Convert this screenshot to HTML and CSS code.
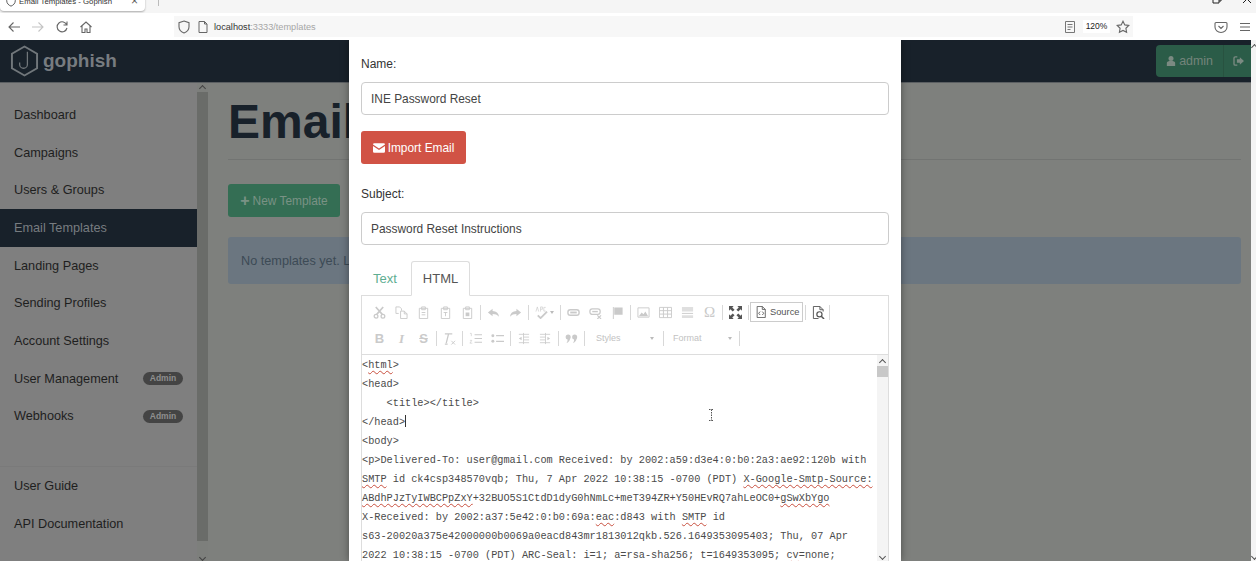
FILE: index.html
```html
<!DOCTYPE html>
<html lang="en">
<head>
<meta charset="utf-8">
<title>Email Templates - Gophish</title>
<link rel="stylesheet" href="styles.css">
</head>
<body>
<svg class="defs" width="0" height="0" aria-hidden="true">
  <defs>
    <symbol id="i-cut" viewBox="0 0 14 14"><path d="M3 1l7 8M11 1L4 9" fill="none" stroke="currentColor" stroke-width="1.8"/><circle cx="3.300" cy="11" r="2" fill="none" stroke="currentColor" stroke-width="1.400"/><circle cx="10.700" cy="11" r="2" fill="none" stroke="currentColor" stroke-width="1.400"/></symbol>
    <symbol id="i-copy" viewBox="0 0 14 14"><path d="M1 1h4l2 2v2M1 1v7h3M6 5.500h4l3 3v5H6zM10 5.500v3h3" fill="none" stroke="currentColor"/></symbol>
    <symbol id="i-paste" viewBox="0 0 14 14"><path d="M2.500 2.500h9v11h-9z" fill="none" stroke="currentColor"/><path d="M5 1h4v3H5zM5 7h4M5 9.500h4" fill="none" stroke="currentColor"/></symbol>
    <symbol id="i-pastet" viewBox="0 0 14 14"><path d="M2.500 2.500h9v11h-9z" fill="none" stroke="currentColor"/><path d="M5 1h4v3H5zM5 7h4M7 7v4" fill="none" stroke="currentColor"/></symbol>
    <symbol id="i-pastew" viewBox="0 0 14 14"><path d="M2.500 2.500h9v11h-9z" fill="none" stroke="currentColor"/><path d="M5 1h4v3H5z" fill="none" stroke="currentColor"/><path d="M5 7h4v4H5z" fill="currentColor"/></symbol>
    <symbol id="i-undo" viewBox="0 0 14 14"><path d="M6 3L1 7l5 4V8.600c3 0 5 .7 7 2.900-.6-3.600-3-5.800-7-6z" fill="currentColor"/></symbol>
    <symbol id="i-redo" viewBox="0 0 14 14"><path d="M8 3l5 4-5 4V8.600c-3 0-5 .7-7 2.900.6-3.600 3-5.800 7-6z" fill="currentColor"/></symbol>
    <symbol id="i-spell" viewBox="0 0 14 14"><path d="M3 10l3 3 7-7" fill="none" stroke="currentColor" stroke-width="2"/><path d="M1 6l1.500-5L4 6M6 1v5M6 1h2v2.500H6M11.500 1.500H9.500v4h2" fill="none" stroke="currentColor" stroke-width=".7"/></symbol>
    <symbol id="i-link" viewBox="0 0 14 14"><rect x="1" y="4" width="12" height="6" rx="2.500" fill="none" stroke="currentColor" stroke-width="1.500"/><path d="M3.500 7h7" stroke="currentColor" stroke-width="2"/></symbol>
    <symbol id="i-unlink" viewBox="0 0 14 14"><rect x="1" y="3" width="11" height="6" rx="2.500" fill="none" stroke="currentColor" stroke-width="1.400"/><path d="M3.500 6h6" stroke="currentColor" stroke-width="1.500"/><path d="M9 10l4 4M13 10l-4 4" stroke="currentColor" stroke-width="1.200"/></symbol>
    <symbol id="i-flag" viewBox="0 0 14 14"><path d="M2 1h1v13H2zM3.500 1.500h9v8h-9z" fill="currentColor"/></symbol>
    <symbol id="i-image" viewBox="0 0 14 14"><path d="M1 2h12v10H1z" fill="none" stroke="currentColor"/><path d="M2 11l3-4 2 2 2-3 3 5z" fill="currentColor"/></symbol>
    <symbol id="i-table" viewBox="0 0 14 14"><path d="M.5 1.500h13v11H.5zM.5 5h13M.5 8.700h13M4.800 1.500v11M9.200 1.500v11" fill="none" stroke="currentColor"/></symbol>
    <symbol id="i-rule" viewBox="0 0 14 14"><path d="M1 1h12v5H1zM1 10h12v3H1z" fill="currentColor" opacity=".6"/><path d="M1 8h12" stroke="currentColor"/></symbol>
    <symbol id="i-max" viewBox="0 0 14 14"><path d="M0 0h5L3.500 1.500 6 4 4 6 1.500 3.500 0 5zM14 0v5l-1.500-1.500L10 6 8 4l2.500-2.500L9 0zM0 14V9l1.500 1.500L4 8l2 2-2.500 2.500L5 14zM14 14H9l1.500-1.500L8 10l2-2 2.500 2.500L14 9z" fill="currentColor"/></symbol>
    <symbol id="i-source" viewBox="0 0 14 14"><path d="M2.500.5h6l3.500 3.500v9.500H2.500zM8.500.5V4H12" fill="none" stroke="currentColor"/><path d="M6 6.500L4.300 8.500 6 10.500M8.500 6.500l1.700 2-1.700 2" fill="none" stroke="currentColor"/></symbol>
    <symbol id="i-preview" viewBox="0 0 14 14"><path d="M7 13.500H1.500V.5h7L12 4v2M8.500.5V4H12" fill="none" stroke="currentColor"/><circle cx="8" cy="9" r="2.800" fill="none" stroke="currentColor" stroke-width="1.300"/><path d="M10 11l3 3" stroke="currentColor" stroke-width="1.600"/></symbol>
    <symbol id="i-clear" viewBox="0 0 14 14"><path d="M2 2h8M6 2L3.500 12M2 13h3" fill="none" stroke="currentColor" stroke-width="1.400"/><path d="M9 9.500l4 4M13 9.500l-4 4" stroke="currentColor"/></symbol>
    <symbol id="i-ol" viewBox="0 0 14 14"><path d="M6 3h8M6 7h8M6 11h8" stroke="currentColor" stroke-width="1.200"/><path d="M1 1.500h1.500v3M1 9h2l-2 3h2.500" fill="none" stroke="currentColor" stroke-width=".7"/></symbol>
    <symbol id="i-ul" viewBox="0 0 14 14"><circle cx="2" cy="4" r="1.600" fill="currentColor"/><circle cx="2" cy="10" r="1.600" fill="currentColor"/><path d="M5.500 4H14M5.500 10H14" stroke="currentColor" stroke-width="1.300"/></symbol>
    <symbol id="i-outdent" viewBox="0 0 14 14"><path d="M2 2.500h11M7 5.500h6M7 8.500h6M2 11.500h11M7 1v12" stroke="currentColor" stroke-width=".9"/><path d="M5 5v4L2 7z" fill="currentColor"/></symbol>
    <symbol id="i-indent" viewBox="0 0 14 14"><path d="M1 2.500h11M1 5.500h6M1 8.500h6M1 11.500h11M7 1v12" stroke="currentColor" stroke-width=".9"/><path d="M9 5v4l3-2z" fill="currentColor"/></symbol>
    <symbol id="i-quote" viewBox="0 0 14 14"><circle cx="3.400" cy="5.500" r="2.700" fill="currentColor"/><circle cx="10.400" cy="5.500" r="2.700" fill="currentColor"/><path d="M5.600 6c0 3-1.500 5-4 6 1-1.500 1.500-3 1-5zM12.600 6c0 3-1.500 5-4 6 1-1.500 1.500-3 1-5z" fill="currentColor"/></symbol>
  </defs>
</svg>

<header class="browser">
  <div class="tabstrip">
    <div class="tab">
      <svg class="tab-icon" viewBox="0 0 14 14"><path d="M7 1l5 1.700v4C12 10 9.500 12 7 13 4.500 12 2 10 2 6.700v-4z" fill="none" stroke="#444"/></svg>
      <span class="tab-title">Email Templates - Gophish</span>
      <span class="tab-close">×</span>
    </div>
    <span class="tab-sep"></span>
    <div class="win-controls">
      <svg class="win-icon" viewBox="0 0 10 10"><path d="M1 3h6v6H1zM3 3V1h6v6H7" fill="none" stroke="#222"/></svg>
      <svg class="win-icon win-x" viewBox="0 0 10 10"><path d="M1 1l8 8M9 1l-8 8" stroke="#222"/></svg>
    </div>
  </div>
  <div class="toolbar">
    <svg class="nav-icon" viewBox="0 0 16 16"><path d="M14 8H3M7.500 3.500L3 8l4.500 4.500" fill="none" stroke="#666" stroke-width="1.100"/></svg>
    <svg class="nav-icon" viewBox="0 0 16 16"><path d="M2 8h11M8.500 3.500L13 8l-4.500 4.500" fill="none" stroke="#c4c4c4" stroke-width="1.100"/></svg>
    <svg class="nav-icon" viewBox="0 0 16 16"><path d="M12.800 6A5 5 0 1 0 13 9M13 2.500V6H9.500" fill="none" stroke="#666" stroke-width="1.100"/></svg>
    <svg class="nav-icon" viewBox="0 0 16 16"><path d="M2.500 8L8 3l5.500 5M4 7v6.500h3V10h2v3.500h3V7" fill="none" stroke="#666" stroke-width="1.100"/></svg>
    <div class="urlbar">
      <svg class="url-icon" viewBox="0 0 14 14"><path d="M7 1l5 1.700v4C12 10 9.500 12 7 13 4.500 12 2 10 2 6.700v-4z" fill="none" stroke="#666" stroke-width="1.100"/></svg>
      <svg class="url-icon" viewBox="0 0 14 14"><path d="M3 1.500h5.500L11 4v8.500H3zM8.500 1.500V4H11" fill="none" stroke="#666"/></svg>
      <span class="url"><b>localhost</b>:3333/templates</span>
      <svg class="reader" viewBox="0 0 14 14"><path d="M2.500 1.500h9v11h-9zM4.500 4.500h5M4.500 7h5M4.500 9.500h3" fill="none" stroke="#777"/></svg>
      <span class="zoom-level">120%</span>
      <svg class="star" viewBox="0 0 14 14"><path d="M7 1.200l1.800 3.700 4 .6-2.900 2.800.7 4L7 10.400l-3.600 1.900.7-4L1.200 5.500l4-.6z" fill="none" stroke="#666" stroke-width="1.100"/></svg>
    </div>
    <svg class="pocket" viewBox="0 0 14 14"><path d="M2 2.500h10a1 1 0 0 1 1 1V7a6 5.500 0 0 1-12 0V3.500a1 1 0 0 1 1-1zM4.500 6L7 8.500 9.500 6" fill="none" stroke="#666" stroke-width="1.100"/></svg>
    <svg class="menu" viewBox="0 0 14 14"><path d="M2 3.500h10M2 7h10M2 10.500h10" stroke="#666" stroke-width="1.200"/></svg>
  </div>
</header>

<div class="viewport">
  <div class="page">
    <nav class="navbar">
      <div class="brand">
        <svg class="logo" viewBox="0 0 30 33"><path d="M15 1.500L28 9v15l-13 7.500L2 24V9z" fill="none" stroke="#71777b" stroke-width="2"/><path d="M18 7v13a4 4 0 0 1-8 0v-2" fill="none" stroke="#71777b" stroke-width="1.300"/></svg>
        <span class="brand-name">gophish</span>
      </div>
      <div class="user-group">
        <div class="user-btn"><svg class="user-icon" viewBox="0 0 12 14"><circle cx="6" cy="4" r="3" fill="#7b8a82"/><path d="M1 13V9.500C1 7.500 3 7 6 7s5 .5 5 2.500V13z" fill="#7b8a82"/></svg>admin</div>
        <div class="logout-btn"><svg class="logout-icon" viewBox="0 0 14 12"><path d="M5 1H2.500A1.500 1.500 0 0 0 1 2.500v7A1.500 1.500 0 0 0 2.500 11H5" fill="none" stroke="#7b8a82" stroke-width="1.600"/><path d="M8 1.500L13 6l-5 4.500V8H4.500V4H8z" fill="#7b8a82"/></svg></div>
      </div>
    </nav>

    <div class="layout">
      <aside class="sidebar">
        <div class="side-list">
          <a class="side-item">Dashboard</a>
          <a class="side-item">Campaigns</a>
          <a class="side-item">Users &amp; Groups</a>
          <a class="side-item active">Email Templates</a>
          <a class="side-item">Landing Pages</a>
          <a class="side-item">Sending Profiles</a>
          <a class="side-item">Account Settings</a>
          <a class="side-item">User Management<span class="badge">Admin</span></a>
          <a class="side-item">Webhooks<span class="badge">Admin</span></a>
          <div class="side-divider"></div>
          <a class="side-item">User Guide</a>
          <a class="side-item">API Documentation</a>
        </div>
        <div class="side-scroll">
          <span class="arrow-up"></span>
          <span class="side-thumb"></span>
          <span class="arrow-down"></span>
        </div>
      </aside>
      <main class="content">
        <h1 class="page-title">Email Templates</h1>
        <div class="rule"></div>
        <div class="new-btn"><span class="plus">+</span>New Template</div>
        <div class="notice">No templates yet. Let's create one!</div>
      </main>
    </div>
  </div>
  <div class="page-scroll">
    <span class="arrow-up dark"></span>
    <span class="arrow-down dark"></span>
  </div>

  <section class="modal">
    <label class="field-label">Name:</label>
    <div class="input">INE Password Reset</div>
    <div class="import-btn">
      <svg class="mail" viewBox="0 0 14 11"><path d="M0 1.500A1.500 1.500 0 0 1 1.500 0h11A1.500 1.500 0 0 1 14 1.500L7 6zM0 3.200L7 7.700l7-4.500V9.500a1.500 1.500 0 0 1-1.500 1.500h-11A1.500 1.500 0 0 1 0 9.500z" fill="#fff"/></svg>
      Import Email
    </div>
    <label class="field-label subject-label">Subject:</label>
    <div class="input">Password Reset Instructions</div>
    <div class="tabs">
      <span class="tab-link">Text</span>
      <span class="tab-link current">HTML</span>
    </div>
    <div class="editor">
      <div class="cke-top">
        <div class="cke-row">
          <svg class="ti"><use href="#i-cut"/></svg>
          <svg class="ti"><use href="#i-copy"/></svg>
          <svg class="ti"><use href="#i-paste"/></svg>
          <svg class="ti"><use href="#i-pastet"/></svg>
          <svg class="ti"><use href="#i-pastew"/></svg>
          <i class="sep"></i>
          <svg class="ti"><use href="#i-undo"/></svg>
          <svg class="ti"><use href="#i-redo"/></svg>
          <i class="sep"></i>
          <svg class="ti"><use href="#i-spell"/></svg><span class="caret"></span>
          <i class="sep"></i>
          <svg class="ti"><use href="#i-link"/></svg>
          <svg class="ti"><use href="#i-unlink"/></svg>
          <svg class="ti"><use href="#i-flag"/></svg>
          <i class="sep"></i>
          <svg class="ti"><use href="#i-image"/></svg>
          <svg class="ti"><use href="#i-table"/></svg>
          <svg class="ti"><use href="#i-rule"/></svg>
          <span class="ti omega">Ω</span>
          <i class="sep"></i>
          <svg class="ti on"><use href="#i-max"/></svg>
          <i class="sep"></i>
          <span class="source-btn"><svg class="ti-s"><use href="#i-source"/></svg>Source</span>
          <i class="sep"></i>
          <svg class="ti on preview"><use href="#i-preview"/></svg>
          <i class="sep"></i>
        </div>
        <div class="cke-row">
          <span class="ti fmt bold">B</span>
          <span class="ti fmt ital">I</span>
          <span class="ti fmt strike">S</span>
          <i class="sep"></i>
          <svg class="ti"><use href="#i-clear"/></svg>
          <i class="sep"></i>
          <svg class="ti"><use href="#i-ol"/></svg>
          <svg class="ti"><use href="#i-ul"/></svg>
          <i class="sep"></i>
          <svg class="ti"><use href="#i-outdent"/></svg>
          <svg class="ti"><use href="#i-indent"/></svg>
          <i class="sep"></i>
          <svg class="ti"><use href="#i-quote"/></svg>
          <i class="sep"></i>
          <span class="combo">Styles<span class="caret"></span></span>
          <i class="sep"></i>
          <span class="combo">Format<span class="caret"></span></span>
          <i class="sep"></i>
        </div>
      </div>
      <div class="cke-body">
        <div class="code">
          <div class="ln">&lt;<span class="sq">html</span>&gt;</div>
          <div class="ln">&lt;head&gt;</div>
          <div class="ln">    &lt;title&gt;&lt;/title&gt;</div>
          <div class="ln">&lt;/head&gt;<span class="cursor"></span></div>
          <div class="ln">&lt;body&gt;</div>
          <div class="ln">&lt;p&gt;Delivered-To: user@gmail.com Received: by 2002:a59:d3e4:0:b0:2a3:ae92:120b with</div>
          <div class="ln"><span class="sq">SMTP</span> id ck4csp348570vqb; Thu, 7 Apr 2022 10:38:15 -0700 (PDT) <span class="sq">X-Google-Smtp-Source:</span></div>
          <div class="ln"><span class="sq">ABdhPJzTyIWBCPpZxY</span>+32BUO5S1CtdD1dyG0hNmLc+meT394ZR+Y50HEvRQ7ahLeOC0+<span class="sq">gSwXbYgo</span></div>
          <div class="ln">X-Received: by 2002:a37:5e42:0:b0:69a:<span class="sq">eac</span>:d843 with <span class="sq">SMTP</span> id</div>
          <div class="ln">s63-20020a375e42000000b0069a0eacd843mr1813012qkb.526.1649353095403; Thu, 07 Apr</div>
          <div class="ln">2022 10:38:15 -0700 (PDT) ARC-Seal: i=1; a=rsa-sha256; t=1649353095; <span class="sq">cv</span>=none;</div>
        </div>
        <div class="code-scroll">
          <span class="arrow-up dark"></span>
          <span class="code-thumb"></span>
          <span class="arrow-down dark"></span>
        </div>
        <svg class="ibeam" viewBox="0 0 7 12"><path d="M1 .5h5M3.500.5v11M1 11.500h5" fill="none" stroke="#555" stroke-dasharray="1.500 1"/></svg>
      </div>
    </div>
  </section>
</div>
</body>
</html>
```

FILE: styles.css
```css
* { box-sizing: border-box; }
html, body { margin: 0; height: 100%; overflow: hidden; }
body { font-family: "Liberation Sans", Arial, sans-serif; background: #fff; display: flex; flex-direction: column; color: #333; }
.defs { position: absolute; }

/* browser chrome */
.browser { flex: none; height: 40px; background: #fff; }
.tabstrip { height: 13px; background: #f5f5f5; display: flex; align-items: flex-end; overflow: hidden; }
.tab { width: 145px; height: 20px; margin-bottom: 2px; background: #fff; border-radius: 0 0 4px 4px; box-shadow: 0 1px 2px rgba(0,0,0,.3); display: flex; align-items: center; padding: 0 5px; font-size: 7.800px; color: #333; flex: none; }
.tab-icon { width: 12px; height: 12px; margin-right: 2px; flex: none; }
.tab-title { flex: 1; white-space: nowrap; }
.tab-close { font-size: 12px; color: #555; margin-right: 2px; }
.tab-sep { width: 1px; height: 6px; background: #bbb; margin: 0 0 7px 13px; align-self: flex-end; flex: none; }
.win-controls { margin-left: auto; display: flex; gap: 20px; padding-right: 4px; align-self: flex-start; margin-top: -6px; }
.win-icon { width: 10px; height: 10px; }
.toolbar { height: 27px; display: flex; align-items: center; padding-left: 6px; }
.nav-icon { width: 16px; height: 16px; margin-right: 8px; flex: none; }
.urlbar { margin-left: 72px; width: 959px; height: 21px; background: #f7f7f7; display: flex; align-items: center; padding: 0 3px; flex: none; }
.url-icon { width: 14px; height: 14px; margin-right: 5px; flex: none; }
.url { font-size: 9.200px; color: #a6a6a6; flex: 1; margin-left: -1px; }
.url b { font-weight: 400; color: #333; }
.reader { width: 14px; height: 14px; margin-right: 6px; flex: none; }
.zoom-level { background: #fff; width: 27px; height: 13px; font-size: 8.500px; line-height: 13px; text-align: center; color: #222; margin-right: 6px; }
.star { width: 14px; height: 14px; flex: none; }
.pocket { width: 14px; height: 14px; margin-left: 81px; flex: none; }
.menu { width: 14px; height: 14px; margin-left: 10px; flex: none; }

/* page */
.viewport { flex: 1; position: relative; min-height: 0; overflow: hidden; display: flex; }
.page { flex: 1; min-width: 0; display: flex; flex-direction: column; background: #7e807d; }
.page-scroll { width: 5px; flex: none; background: #f4f4f4; display: flex; flex-direction: column; justify-content: space-between; align-items: center; padding: 3px 0 2px 2px; overflow: hidden; }
.navbar { flex: none; height: 43px; background: #18212a; border-bottom: 1px solid #5b5f62; display: flex; align-items: center; justify-content: space-between; padding: 0 0 0 10px; }
.brand { display: flex; align-items: center; gap: 4px; }
.logo { width: 29px; height: 32px; }
.brand-name { font-size: 19px; font-weight: 700; color: #777c80; }
.user-group { display: flex; height: 32px; }
.user-btn { width: 68px; background: #2b5c48; border-radius: 4px 0 0 4px; border-right: 1px solid #285240; color: #74847b; font-size: 12.400px; display: flex; align-items: center; justify-content: center; gap: 3px; }
.user-icon { width: 10px; height: 12px; }
.logout-btn { width: 27px; background: #2b5c48; display: flex; align-items: center; justify-content: center; }
.logout-icon { width: 12px; height: 10px; margin-left: 3px; }
.layout { flex: 1; display: flex; min-height: 0; }
.sidebar { width: 208px; flex: none; background: #7f7f7f; display: flex; position: relative; }
.side-list { width: 197px; padding-top: 13px; flex: none; }
.side-item { height: 37.700px; padding: 0 14px; font-size: 12.700px; color: #1e1e1e; display: flex; align-items: center; justify-content: space-between; }
.side-item.active { background: #18212a; color: #777c80; }
.side-divider { height: 32px; border-bottom: 1px solid #7a7a7a; }
.badge { width: 40px; height: 13px; border-radius: 7px; background: #444; color: #8f8f8f; font-size: 8.500px; font-weight: 700; line-height: 13px; text-align: center; }
.side-scroll { width: 11px; display: flex; flex-direction: column; align-items: center; padding-top: 1px; background: #7d7f7c; }
.side-thumb { width: 11px; flex: none; height: 449px; background: #6a6c69; margin: 0 0 14px; }
.arrow-up, .arrow-down { width: 5px; height: 5px; border: solid #444; border-width: 1.500px 0 0 1.500px; transform: rotate(45deg); flex: none; margin: 2px 0 1px; }
.arrow-down { transform: rotate(225deg); margin: 0; }
.dark.arrow-up, .dark.arrow-down { border-color: #555; }
.content { flex: 1; min-width: 0; padding: 0 10px 0 20px; overflow: hidden; }
.page-title { margin: 8px 0 0; font-size: 48px; line-height: 61px; font-weight: 700; color: #18212a; white-space: nowrap; }
.rule { height: 1px; background: #727472; margin-top: 7px; }
.new-btn { margin-top: 24px; width: 112px; height: 33px; background: #346e54; border-radius: 3px; color: #7a9285; font-size: 11.900px; display: flex; align-items: center; justify-content: center; }
.plus { font-size: 16px; font-weight: 700; margin-right: 3px; }
.notice { margin-top: 20px; height: 47px; background: #6b7680; border-radius: 3px; padding: 0 13px; font-size: 12.700px; color: #3c4a55; display: flex; align-items: center; }

/* modal */
.modal { position: absolute; left: 349px; top: 0; width: 552px; height: 100%; background: #fff; box-shadow: 0 0 8px rgba(0,0,0,.4); padding: 0 12px; overflow: hidden; font-size: 12px; color: #333; }
.field-label { display: block; font-size: 12px; line-height: 16px; margin-top: 16px; }
.subject-label { margin-top: 22px; }
.input { margin-top: 10px; height: 33px; border: 1px solid #ccc; border-radius: 4px; padding: 0 9px; display: flex; align-items: center; font-size: 11.900px; color: #444; }
.import-btn { margin-top: 16px; width: 105px; height: 33px; background: #d15345; border-radius: 3px; color: #fff; font-size: 11.900px; display: flex; align-items: center; justify-content: center; gap: 3px; }
.mail { width: 12px; height: 10px; }
.tabs { display: flex; margin-top: 16px; height: 34px; position: relative; }
.tab-link { width: 50px; display: flex; align-items: center; justify-content: center; font-size: 13px; color: #5fae92; padding-right: 2px; }
.tab-link.current { width: 59px; color: #555; background: #fff; border: 1px solid #ddd; border-bottom: 1px solid #fff; border-radius: 3px 3px 0 0; z-index: 1; margin-bottom: -1px; height: 35px; padding: 0; }
.editor { border: 1px solid #ddd; border-bottom: 0; width: 528px; }
.cke-top { height: 59px; padding: 3px 5px 0 11px; border-bottom: 1px solid #ddd; }
.cke-row { height: 26px; display: flex; align-items: center; gap: 9px; }
.ti { width: 13px; height: 13px; flex: none; color: #cacaca; display: inline-block; }
.ti.on { color: #555; }
.fmt { font-family: "Liberation Sans", sans-serif; font-size: 13px; line-height: 13px; text-align: center; }
.bold { font-weight: 700; }
.ital { font-family: "Liberation Serif", serif; font-style: italic; font-weight: 700; }
.strike { font-weight: 700; text-decoration: line-through; }
.omega { font-family: "Liberation Serif", serif; font-size: 15px; line-height: 13px; text-align: center; }
.sep { width: 1px; height: 15px; background: #d8d8d8; flex: none; margin: 0 -3px; }
.caret { width: 0; height: 0; border: 2px solid transparent; border-top: 3px solid #bbb; border-bottom: 0; margin-left: -7px; flex: none; }
.source-btn { display: flex; align-items: center; gap: 3px; height: 20px; padding: 0 3px 0 4px; border: 1px solid #ccc; font-size: 9.300px; color: #555; margin: 0 -4px 0 -5px; flex: none; }
.ti-s { width: 12px; height: 12px; color: #555; }
.preview { margin: 0 -2px 0 0; }
.combo { width: 66px; display: flex; justify-content: space-between; align-items: center; font-size: 9px; color: #c2c2c2; padding: 0 3px 0 5px; flex: none; }
.combo .caret { margin: 0; }
.combo + .sep + .combo { width: 63px; padding: 0 1px 0 3px; }
.cke-body { position: relative; display: flex; height: 206px; }
.code { flex: 1; min-width: 0; padding-top: 1px; font-family: "Liberation Mono", monospace; font-size: 10.250px; color: #4a4a4a; }
.ln { height: 19px; line-height: 19px; white-space: pre; }
.sq { text-decoration: underline wavy #c8503f 1px; text-underline-offset: 2px; }
.cursor { display: inline-block; width: 1px; height: 12px; background: #333; vertical-align: -2px; }
.code-scroll { width: 11px; flex: none; background: #f4f4f4; display: flex; flex-direction: column; align-items: center; padding: 3px 0 2px; }
.code-thumb { width: 11px; height: 11px; background: #c8c8c8; flex: none; margin-bottom: auto; }
.ibeam { position: absolute; left: 346px; top: 54px; width: 7px; height: 12px; }
```
